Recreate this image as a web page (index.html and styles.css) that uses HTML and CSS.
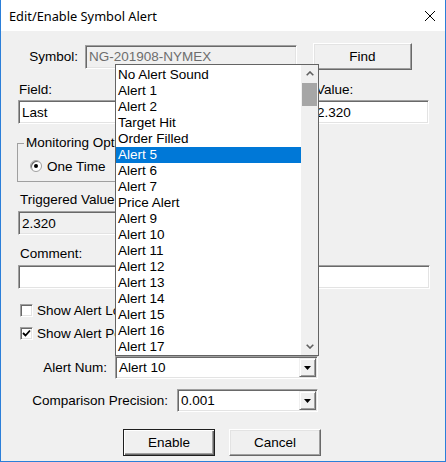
FILE: index.html
```html
<!DOCTYPE html>
<html lang="en">
<head>
  <meta charset="UTF-8">
  <meta name="viewport" content="width=device-width, initial-scale=1.0">
  <title>Edit/Enable Symbol Alert</title>
  <link rel="stylesheet" href="styles.css">
</head>
<body>
<div class="window">
  <div class="title-bar">
    <span class="title">Edit/Enable Symbol Alert</span>
    <svg class="close-icon" width="10" height="10" viewBox="0 0 10 10">
      <path d="M0 0L10 10M10 0L0 10" stroke="#000" stroke-width="1"/>
    </svg>
  </div>

  <div class="client">
    <div class="row symbol-row">
      <label class="symbol-label">Symbol:</label>
      <div class="edit edit-readonly symbol-edit">NG-201908-NYMEX</div>
      <button class="btn find-btn">Find</button>
    </div>

    <div class="row field-row">
      <div class="field-col">
        <div class="caption">Field:</div>
        <div class="edit">Last</div>
      </div>
      <div class="value-col">
        <div class="caption value-caption">Value:</div>
        <div class="edit">2.320</div>
      </div>
    </div>

    <fieldset class="group">
      <legend>Monitoring Options</legend>
      <div class="row option-row">
        <span class="radio checked"></span>
        <span class="option-text">One Time</span>
      </div>
    </fieldset>

    <div class="caption triggered-caption">Triggered Value</div>
    <div class="edit edit-readonly triggered-edit">2.320</div>

    <div class="caption comment-caption">Comment:</div>
    <div class="edit comment-edit"></div>

    <div class="row check-row first-check">
      <span class="checkbox"></span>
      <span class="option-text">Show Alert Log</span>
    </div>
    <div class="row check-row">
      <span class="checkbox">
        <svg width="9" height="9" viewBox="0 0 9 9">
          <path d="M1 4L3.5 6.5L8 1.5" fill="none" stroke="#000" stroke-width="1.8"/>
        </svg>
      </span>
      <span class="option-text">Show Alert Popup</span>
    </div>

    <div class="row combo-row alert-row">
      <label class="alert-label">Alert Num:</label>
      <div class="combo alert-combo">
        <span class="combo-text">Alert 10</span>
        <span class="combo-arrow">
          <svg width="7" height="4" viewBox="0 0 7 4"><path d="M0 0H7L3.5 4Z" fill="#000"/></svg>
        </span>
      </div>
    </div>

    <div class="row combo-row precision-row">
      <label class="precision-label">Comparison Precision:</label>
      <div class="combo precision-combo">
        <span class="combo-text">0.001</span>
        <span class="combo-arrow">
          <svg width="7" height="4" viewBox="0 0 7 4"><path d="M0 0H7L3.5 4Z" fill="#000"/></svg>
        </span>
      </div>
    </div>

    <div class="row button-row">
      <button class="btn btn-default">Enable</button>
      <button class="btn">Cancel</button>
    </div>
  </div>

  <!-- open drop-down of the Alert Num combo -->
  <div class="dropdown">
    <ul class="dropdown-items">
      <li>No Alert Sound</li>
      <li>Alert 1</li>
      <li>Alert 2</li>
      <li>Target Hit</li>
      <li>Order Filled</li>
      <li class="selected">Alert 5</li>
      <li>Alert 6</li>
      <li>Alert 7</li>
      <li>Price Alert</li>
      <li>Alert 9</li>
      <li>Alert 10</li>
      <li>Alert 11</li>
      <li>Alert 12</li>
      <li>Alert 13</li>
      <li>Alert 14</li>
      <li>Alert 15</li>
      <li>Alert 16</li>
      <li>Alert 17</li>
    </ul>
    <div class="scrollbar">
      <div class="scroll-btn">
        <svg width="8" height="5" viewBox="0 0 8 5"><path d="M0.7 4.3L4 1L7.3 4.3" fill="none" stroke="#606060" stroke-width="1.6"/></svg>
      </div>
      <div class="scroll-thumb"></div>
      <div class="scroll-track"></div>
      <div class="scroll-btn">
        <svg width="8" height="5" viewBox="0 0 8 5"><path d="M0.7 0.7L4 4L7.3 0.7" fill="none" stroke="#606060" stroke-width="1.6"/></svg>
      </div>
    </div>
  </div>
</div>
</body>
</html>
```

FILE: styles.css
```css
body {
  margin: 0;
  background-color: #ffffff;
  font-family: "Liberation Sans", Arial, sans-serif;
  font-size: 13.5px;
  color: #000000;
}

.window {
  position: relative;
  width: 446px;
  height: 462px;
  box-sizing: border-box;
  border: 1px solid #2b7fd9;
  border-top: none;
  background-color: #f0f0f0;
}

.title-bar {
  height: 31px;
  display: flex;
  align-items: center;
  justify-content: space-between;
  padding: 0 10px 0 8px;
  background-color: #ffffff;
}

.title {
  font-family: "Noto Sans", sans-serif;
  font-size: 12.8px;
}

.client {
  padding-top: 12px;
}

.row {
  display: flex;
  align-items: center;
}

/* Поля вводу */
.edit {
  box-sizing: border-box;
  height: 24px;
  display: flex;
  align-items: center;
  padding: 1px 3px;
  background-color: #ffffff;
  border: 1px solid;
  border-color: #a0a0a0 #ffffff #ffffff #a0a0a0;
  box-shadow: inset 1px 1px #696969, inset -1px -1px #e3e3e3;
  white-space: nowrap;
}

.edit-readonly {
  background-color: #f0f0f0;
}

.caption {
  height: 16px;
  line-height: 16px;
  padding-left: 1px;
}

/* Кнопки */
.btn {
  box-sizing: border-box;
  width: 92px;
  height: 27px;
  padding: 0;
  font-family: inherit;
  font-size: 13.5px;
  color: #000000;
  background-color: #f0f0f0;
  border: 1px solid;
  border-color: #ffffff #696969 #696969 #ffffff;
  box-shadow: inset -1px -1px #a0a0a0, inset 1px 1px #e3e3e3;
}

.btn-default {
  border: 1px solid #1e1e1e;
  box-shadow: inset 1px 1px #ffffff, inset -1px -1px #696969, inset -2px -2px #a0a0a0;
}

/* Symbol */
.symbol-row {
  height: 27px;
}

.symbol-label {
  width: 77px;
  margin-right: 7px;
  text-align: right;
}

.symbol-edit {
  width: 212px;
  color: #6d6d6d;
}

.find-btn {
  width: 99px;
  margin-left: 16px;
}

/* Field / Value */
.field-row {
  margin-top: 12px;
  align-items: flex-start;
}

.field-col {
  width: 280px;
  margin-left: 17px;
}

.value-col {
  width: 116px;
  margin-left: 15px;
}

.field-col .edit,
.value-col .edit {
  margin-top: 2px;
}

.value-caption {
  padding-left: 3px;
}

/* Monitoring Options */
.group {
  width: 284px;
  box-sizing: border-box;
  margin: 11px 0 0 16px;
  padding: 0 0 7px 6px;
  border: 1px solid #a0a0a0;
  min-inline-size: 0;
}

.group legend {
  height: 16px;
  line-height: 16px;
  padding: 0 2px;
}

.option-row {
  height: 16px;
  margin-top: 7px;
}

.radio {
  box-sizing: border-box;
  width: 12px;
  height: 12px;
  margin-left: 6px;
  border: 1px solid #a0a0a0;
  border-radius: 50%;
  background-color: #ffffff;
  box-shadow: inset 1px 1px #696969;
  display: flex;
  align-items: center;
  justify-content: center;
}

.radio.checked::after {
  content: "";
  width: 4px;
  height: 4px;
  border-radius: 50%;
  background-color: #000000;
}

.option-text {
  margin-left: 5px;
  white-space: nowrap;
}

/* Triggered Value / Comment */
.triggered-caption {
  margin: 10px 0 0 17px;
  padding-left: 2px;
}

.triggered-edit {
  width: 280px;
  margin: 3px 0 0 17px;
}

.comment-caption {
  margin: 11px 0 0 17px;
  padding-left: 2px;
}

.comment-edit {
  width: 412px;
  margin: 3px 0 0 17px;
}

/* Checkboxes */
.check-row {
  height: 16px;
  margin-top: 7px;
}

.first-check {
  margin-top: 13px;
}

.checkbox {
  box-sizing: border-box;
  width: 13px;
  height: 13px;
  margin-left: 19px;
  background-color: #ffffff;
  border: 1px solid;
  border-color: #a0a0a0 #ffffff #ffffff #a0a0a0;
  box-shadow: inset 1px 1px #696969, inset -1px -1px #e3e3e3;
  display: flex;
  align-items: center;
  justify-content: center;
}

.check-row .option-text {
  margin-left: 4px;
}

/* Combo boxes */
.combo-row {
  height: 23px;
}

.alert-row {
  margin-top: 15px;
}

.precision-row {
  margin-top: 10px;
}

.alert-label {
  width: 106px;
  margin-right: 8px;
  text-align: right;
}

.precision-label {
  width: 167px;
  margin-right: 9px;
  text-align: right;
}

.combo {
  box-sizing: border-box;
  height: 23px;
  display: flex;
  align-items: stretch;
  padding: 1px;
  background-color: #ffffff;
  border: 1px solid;
  border-color: #a0a0a0 #ffffff #ffffff #a0a0a0;
  box-shadow: inset 1px 1px #696969, inset -1px -1px #e3e3e3;
}

.alert-combo {
  width: 203px;
}

.precision-combo {
  width: 141px;
}

.combo-text {
  flex: 1;
  display: flex;
  align-items: center;
  padding-left: 2px;
}

.combo-arrow {
  box-sizing: border-box;
  width: 17px;
  display: flex;
  align-items: center;
  justify-content: center;
  background-color: #f0f0f0;
  border: 1px solid;
  border-color: #f0f0f0 #696969 #696969 #f0f0f0;
  box-shadow: inset 1px 1px #ffffff, inset -1px -1px #a0a0a0;
}

/* Enable / Cancel */
.button-row {
  margin: 17px 0 0 122px;
  gap: 14px;
}

/* Відкритий список */
.dropdown {
  position: absolute;
  left: 114px;
  top: 64px;
  width: 204px;
  height: 292px;
  box-sizing: border-box;
  display: flex;
  border: 1px solid #646464;
  background-color: #ffffff;
}

.dropdown-items {
  flex: 1;
  list-style-type: none;
  margin: 0;
  padding: 2px 0 0;
}

.dropdown-items li {
  height: 16px;
  line-height: 16px;
  padding-left: 2px;
  white-space: nowrap;
}

.dropdown-items .selected {
  background-color: #0078d7;
  color: #ffffff;
}

.scrollbar {
  width: 17px;
  display: flex;
  flex-direction: column;
  background-color: #f0f0f0;
}

.scroll-btn {
  height: 17px;
  display: flex;
  align-items: center;
  justify-content: center;
}

.scroll-thumb {
  height: 23px;
  margin: 1px 1px 0;
  background-color: #a6a6a6;
}

.scroll-track {
  flex: 1;
}
```
